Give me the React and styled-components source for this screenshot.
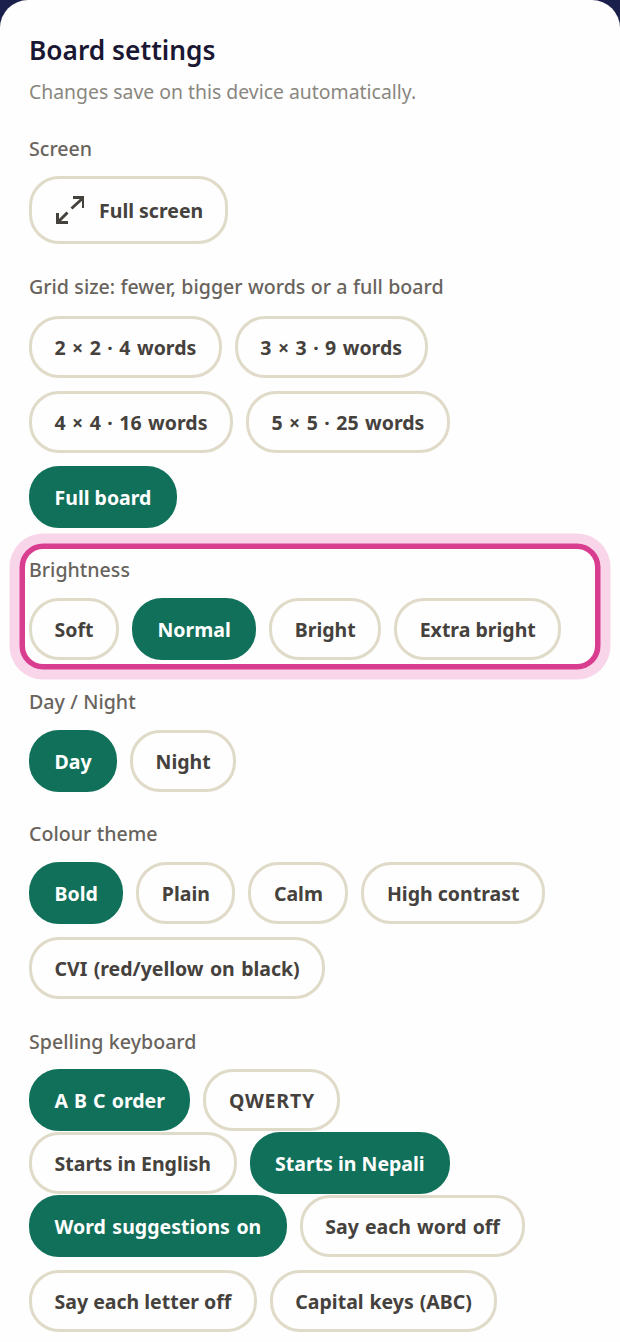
import React from "react";
import styled, { createGlobalStyle } from "styled-components";

const GlobalStyle = createGlobalStyle`
  html, body {
    margin: 0;
    padding: 0;
    background: #1a1f4b;
  }
  * {
    box-sizing: border-box;
  }
`;

const Sheet = styled.div`
  width: 620px;
  height: 1342px;
  overflow: hidden;
  background: #fefefe;
  border-radius: 28px 28px 0 0;
  padding: 30px 29px 0;
  font-family: "Noto Sans", "Open Sans", sans-serif;
`;

const Title = styled.h1`
  margin: 0;
  font-size: 26.3px;
  line-height: 40px;
  font-weight: 600;
  color: #1a1733;
`;

const Subtitle = styled.p`
  margin: 7px 0 30px;
  font-size: 19.4px;
  line-height: 30px;
  color: #8a8780;
`;

const Section = styled.section`
  margin-bottom: ${(p) => p.$after ?? 30}px;
`;

const HighlightSection = styled.section`
  margin: -9px -4px 26px;
  padding: 9px 4px 4px;
  border-radius: 18px;
  box-shadow:
    0 0 0 5.5px #d93d8f,
    0 0 0 15.5px #f8d5e8;
`;

const Label = styled.div`
  font-size: 19.6px;
  line-height: 24px;
  font-weight: 500;
  word-spacing: 0.3px;
  color: #68635c;
  margin-bottom: ${(p) => p.$gap ?? 16}px;
`;

const Chips = styled.div`
  display: flex;
  flex-wrap: wrap;
  gap: 13px;
  margin-bottom: ${(p) => p.$after ?? 0}px;
`;

const Chip = styled.button`
  display: inline-flex;
  align-items: center;
  gap: 15px;
  height: 62px;
  padding: 0 22.5px;
  border: 3px solid ${(p) => p.$on ? "#11705a" : "#dfdbc8"};
  border-radius: 30px;
  background: ${(p) => p.$on ? "#11705a" : "#fefefe"};
  color: ${(p) => p.$on ? "#fff" : "#45413d"};
  font-family: inherit;
  font-size: 19.5px;
  font-weight: 700;
  white-space: nowrap;
  word-spacing: ${(p) => p.$wide ?? 0}px;
  letter-spacing: ${(p) => p.$track ?? 0}px;
`;

const IconChip = styled(Chip)`
  height: 68px;
  padding: 0 22px 0 24px;
`;

const ExpandIcon = () => (
  <svg width="28" height="28" viewBox="0 0 28 28" fill="none" stroke="#45413d" strokeWidth="3">
    <path d="M17 1.5h10.5V12M27 2 15.5 12.5M1.5 17v9.5H12M2 26l9.5-9.5" />
  </svg>
);

export default function App() {
  return (
    <Sheet>
      <GlobalStyle />
      <Title>Board settings</Title>
      <Subtitle>Changes save on this device automatically.</Subtitle>

      <Section $after={31}>
        <Label $gap={15}>Screen</Label>
        <Chips>
          <IconChip><ExpandIcon />Full screen</IconChip>
        </Chips>
      </Section>

      <Section>
        <Label $gap={17}>Grid size: fewer, bigger words or a full board</Label>
        <Chips>
          <Chip $wide={1.4}>2 × 2 · 4 words</Chip>
          <Chip $wide={1.4}>3 × 3 · 9 words</Chip>
          <Chip $wide={1.4}>4 × 4 · 16 words</Chip>
          <Chip $wide={1.4}>5 × 5 · 25 words</Chip>
          <Chip $on>Full board</Chip>
        </Chips>
      </Section>

      <HighlightSection>
        <Label>Brightness</Label>
        <Chips>
          <Chip>Soft</Chip>
          <Chip $on>Normal</Chip>
          <Chip>Bright</Chip>
          <Chip>Extra bright</Chip>
        </Chips>
      </HighlightSection>

      <Section>
        <Label>Day / Night</Label>
        <Chips>
          <Chip $on>Day</Chip>
          <Chip>Night</Chip>
        </Chips>
      </Section>

      <Section $after={31}>
        <Label>Colour theme</Label>
        <Chips>
          <Chip $on>Bold</Chip>
          <Chip>Plain</Chip>
          <Chip>Calm</Chip>
          <Chip>High contrast</Chip>
          <Chip $wide={1.3}>CVI (red/yellow on black)</Chip>
        </Chips>
      </Section>

      <Section>
        <Label $gap={15}>Spelling keyboard</Label>
        <Chips $after={1}>
          <Chip $on $wide={1}>A B C order</Chip>
          <Chip $track={0.8}>QWERTY</Chip>
        </Chips>
        <Chips $after={1}>
          <Chip>Starts in English</Chip>
          <Chip $on>Starts in Nepali</Chip>
        </Chips>
        <Chips>
          <Chip $on $wide={1.5}>Word suggestions on</Chip>
          <Chip $wide={1}>Say each word off</Chip>
          <Chip>Say each letter off</Chip>
          <Chip $wide={0.8}>Capital keys (ABC)</Chip>
        </Chips>
      </Section>
    </Sheet>
  );
}
